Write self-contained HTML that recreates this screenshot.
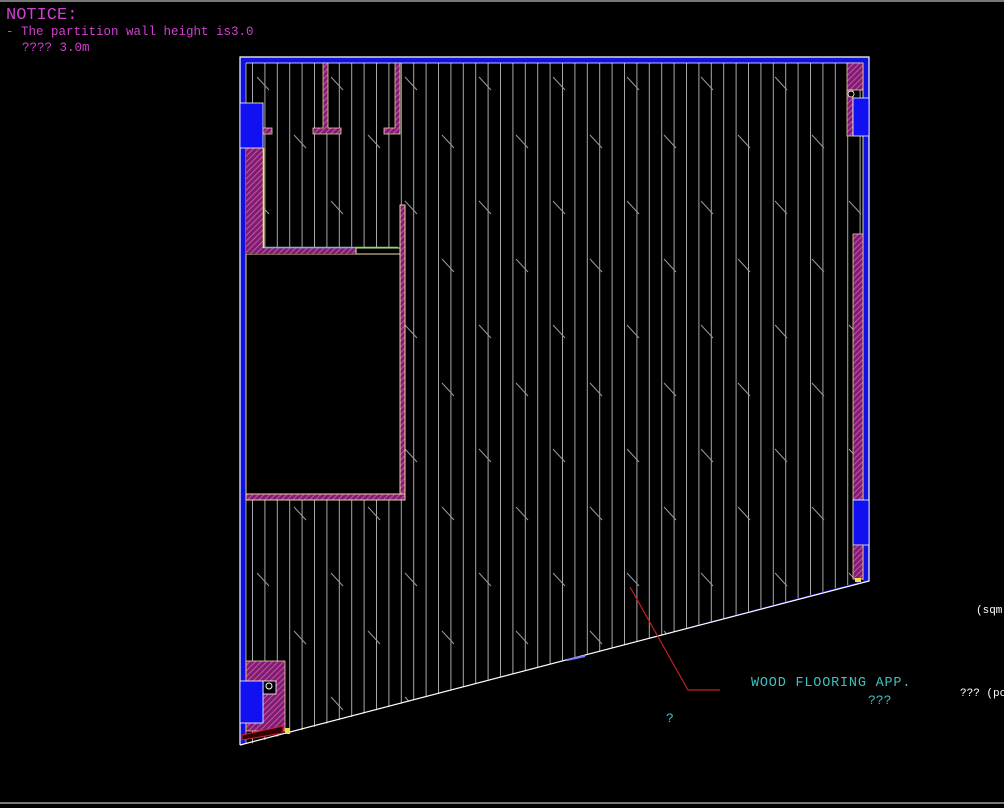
<!DOCTYPE html>
<html><head><meta charset="utf-8"><style>
html,body{margin:0;padding:0;background:#000;width:1004px;height:808px;overflow:hidden}
svg{display:block}
text{font-family:"Liberation Mono","DejaVu Sans Mono",monospace}
</style></head><body>
<svg width="1004" height="808" viewBox="0 0 1004 808" xmlns="http://www.w3.org/2000/svg">
<defs>
<pattern id="h" width="4" height="4" patternUnits="userSpaceOnUse" patternTransform="rotate(45)">
<rect width="4" height="4" fill="#7a2070"/><line x1="0" y1="0" x2="0" y2="4" stroke="#e050b0" stroke-width="1.8"/>
</pattern>
<pattern id="v" x="252" y="0" width="12.4" height="800" patternUnits="userSpaceOnUse">
<line x1="0.5" y1="0" x2="0.5" y2="800" stroke="#a8a8a8" stroke-width="1"/>
</pattern>
<pattern id="d" x="249" y="63" width="74" height="124" patternUnits="userSpaceOnUse">
<line x1="8" y1="14" x2="20" y2="27" stroke="#999" stroke-width="1"/>
<line x1="45" y1="72" x2="57" y2="85" stroke="#999" stroke-width="1"/>
</pattern>
<clipPath id="c"><polygon points="246,63 863,63 863,581 246,745"/></clipPath>
</defs>
<rect x="0" y="0" width="1004" height="2" fill="#777"/>
<rect x="0" y="802" width="1004" height="2" fill="#777"/>
<!-- blue outer walls -->
<polygon points="240,57 869,57 869,581 240,745" fill="#1010e0"/>
<polygon points="246,63 863,63 863,581 246,745" fill="#000"/>
<g clip-path="url(#c)">
<rect x="246" y="63" width="617" height="690" fill="url(#v)"/>
<rect x="246" y="63" width="617" height="690" fill="url(#d)"/>
</g>
<polyline points="240,745 240,57 869,57 869,581 240,745" fill="none" stroke="#fff" stroke-width="1.2"/>
<line x1="246" y1="63" x2="863" y2="63" stroke="#fff" stroke-width="0.8"/>
<line x1="863" y1="63" x2="863" y2="580" stroke="#fff" stroke-width="0.8"/>
<line x1="246" y1="63" x2="246" y2="744" stroke="#fff" stroke-width="0.6"/>
<!-- black room -->
<rect x="246" y="254" width="154" height="240" fill="#000" stroke="#f0d0a0" stroke-width="1"/>
<rect x="400" y="205" width="5" height="295" fill="url(#h)" stroke="#f0d0a0" stroke-width="1"/>
<rect x="246" y="494" width="159" height="6" fill="url(#h)" stroke="#f0d0a0" stroke-width="1"/>
<rect x="246" y="248" width="110" height="6" fill="url(#h)"/>
<rect x="356" y="248" width="44" height="6" fill="#000" stroke="#f0e0a0" stroke-width="1"/>
<line x1="263" y1="247.5" x2="356" y2="247.5" stroke="#60c0e0" stroke-width="1.5"/>
<line x1="356" y1="247.5" x2="398" y2="247.5" stroke="#80e080" stroke-width="1.5"/>
<!-- top-left column & window -->
<rect x="246" y="148" width="17" height="100" fill="url(#h)"/>
<line x1="263.5" y1="148" x2="263.5" y2="248" stroke="#f0f040" stroke-width="1.5"/>
<rect x="240" y="103" width="23" height="45" fill="#1010f0" stroke="#fff" stroke-width="0.8"/>
<!-- partitions -->
<rect x="263" y="128" width="9" height="6" fill="url(#h)" stroke="#f0d0a0" stroke-width="0.8"/>
<path d="M323,63 V128 H313 V134 H341 V128 H328 V63 Z" fill="url(#h)" stroke="#f0d0a0" stroke-width="0.8"/>
<path d="M395,63 V128 H384 V134 H400 V63 Z" fill="url(#h)" stroke="#f0d0a0" stroke-width="0.8"/>
<!-- right side -->
<rect x="847" y="63" width="16" height="27" fill="url(#h)" stroke="#f0d0a0" stroke-width="0.8"/>
<rect x="847" y="90" width="6" height="46" fill="url(#h)" stroke="#f0d0a0" stroke-width="0.8"/>
<circle cx="851" cy="94" r="3" fill="#000" stroke="#fff" stroke-width="0.8"/>
<rect x="853" y="98" width="16" height="38" fill="#1010f0" stroke="#fff" stroke-width="0.8"/>
<rect x="853" y="234" width="10" height="266" fill="url(#h)" stroke="#f0d0a0" stroke-width="0.8"/>
<rect x="853" y="500" width="16" height="45" fill="#1010f0" stroke="#fff" stroke-width="0.8"/>
<rect x="853" y="545" width="10" height="34" fill="url(#h)" stroke="#f0d0a0" stroke-width="0.8"/>
<rect x="855" y="578" width="6" height="4" fill="#f0e040"/>
<!-- bottom-left -->
<rect x="246" y="661" width="39" height="70" fill="url(#h)" stroke="#f0d0a0" stroke-width="0.8"/>
<rect x="263" y="681" width="13" height="13" fill="#000" stroke="#fff" stroke-width="0.8"/>
<circle cx="269" cy="686" r="3" fill="none" stroke="#fff" stroke-width="1"/>
<rect x="240" y="681" width="23" height="42" fill="#1010f0" stroke="#fff" stroke-width="0.8"/>
<polygon points="242,735 283,726 283,733 242,740" fill="#300" stroke="#d02030" stroke-width="1"/>
<rect x="285" y="728" width="5" height="6" fill="#f0e040"/>
<line x1="567" y1="660" x2="585" y2="656" stroke="#8080ff" stroke-width="2"/>
<!-- leader -->
<polyline points="630,587 688,690 720,690" fill="none" stroke="#c02020" stroke-width="1.2"/>
<!-- texts -->
<text x="6" y="19" fill="#d040d0" font-size="17">NOTICE:</text>
<text x="6" y="35" fill="#d040d0" font-size="12.5">- The partition wall height is3.0</text>
<text x="22" y="51" fill="#d040d0" font-size="12.5">????  3.0m</text>
<text x="751" y="686" fill="#40c0c0" font-size="13.5" letter-spacing="0.8">WOOD FLOORING APP.</text>
<text x="868" y="704" fill="#40c0c0" font-size="13">???</text>
<text x="666" y="722" fill="#40c0c0" font-size="13">?</text>
<text x="976" y="613" fill="#fff" font-size="11">(sqm)</text>
<text x="960" y="696" fill="#fff" font-size="11">???  (pcs</text>
</svg>
</body></html>
